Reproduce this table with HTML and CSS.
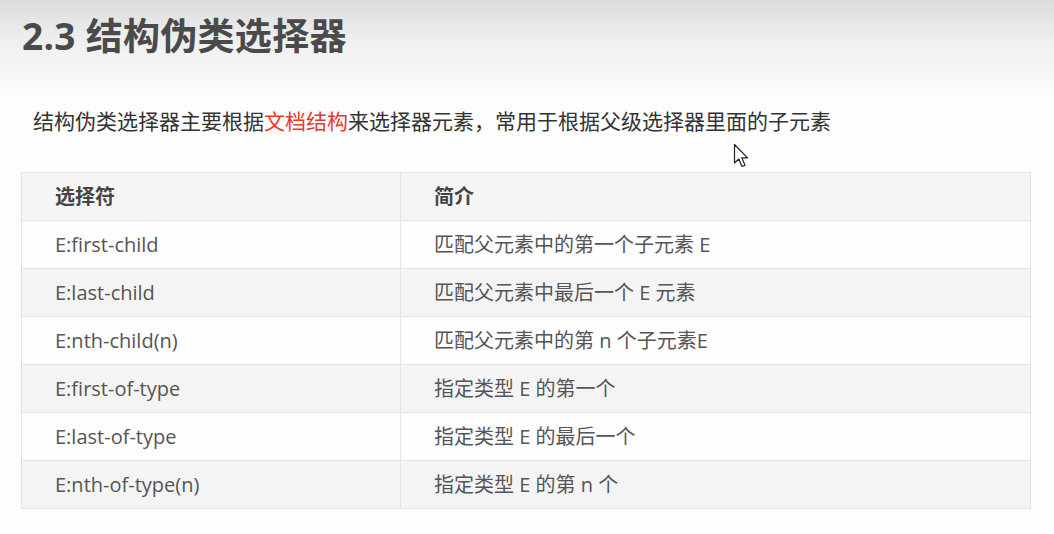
FILE: index.html
```html
<!DOCTYPE html>
<html lang="zh">
<head>
<meta charset="utf-8">
<title>2.3 结构伪类选择器</title>
<link rel="stylesheet" href="styles.css">
</head>
<body>
<div class="page">
  <header class="top">
    <h1 class="title">2.3 结构伪类选择器</h1>
  </header>
  <p class="intro">结构伪类选择器主要根据<span class="hl">文档结构</span>来选择器元素，常用于根据父级选择器里面的子元素</p>
  <table class="sel">
    <thead>
      <tr><th class="c1">选择符</th><th class="c2">简介</th></tr>
    </thead>
    <tbody>
      <tr><td>E:first-child</td><td>匹配父元素中的第一个子元素 E</td></tr>
      <tr><td>E:last-child</td><td>匹配父元素中最后一个 E 元素</td></tr>
      <tr><td>E:nth-child(n)</td><td>匹配父元素中的第 n 个子元素E</td></tr>
      <tr><td>E:first-of-type</td><td>指定类型 E 的第一个</td></tr>
      <tr><td>E:last-of-type</td><td>指定类型 E 的最后一个</td></tr>
      <tr><td>E:nth-of-type(n)</td><td>指定类型 E 的第 n 个</td></tr>
    </tbody>
  </table>
  <svg class="cursor" width="16" height="26" viewBox="0 0 16 26">
    <path d="M1.5 1.5 L1.5 20 L5.8 16 L9 23.5 L12 22.2 L8.8 14.8 L14.5 14.8 Z" fill="#fff" stroke="#222" stroke-width="1.2" stroke-linejoin="round"/>
  </svg>
</div>
</body>
</html>
```
FILE: styles.css
```css
html, body {
  margin: 0;
  padding: 0;
  background: #fdfdfd;
}
.page {
  position: relative;
  width: 1054px;
  height: 534px;
  overflow: hidden;
  font-family: "Open Sans", "Noto Sans CJK SC", sans-serif;
  color: #444;
}
.top {
  height: 90px;
  background: linear-gradient(to bottom, #dcdcdc 0%, #efefef 45%, #fbfbfb 100%);
  padding: 0 0 0 22px;
  box-sizing: border-box;
}
.title {
  margin: 0;
  padding-top: 14px;
  font-size: 37px;
  line-height: 44px;
  font-weight: 700;
  color: #4a4a4a;
  letter-spacing: 0.3px;
}
.intro {
  margin: 16px 0 0 33px;
  font-size: 21px;
  line-height: 30px;
  color: #333;
}
.hl {
  color: #e8392b;
}
.sel {
  margin: 36px 0 0 21px;
  width: 1010px;
  border-collapse: collapse;
  font-size: 20px;
  color: #555;
  border: 1px solid #e3e3e3;
}
.sel th, .sel td {
  height: 48px;
  padding: 0 0 0 33px;
  text-align: left;
  border: 1px solid #e3e3e3;
  box-sizing: border-box;
  line-height: 28px;
}
.sel th {
  font-weight: 700;
  color: #444;
  background: #f5f5f5;
}
.sel .c1 {
  width: 379px;
}
.sel tbody tr:nth-child(odd) {
  background: #fefefe;
}
.sel tbody tr:nth-child(even) {
  background: #f4f4f4;
}
.cursor {
  position: absolute;
  left: 733px;
  top: 143px;
}
```
